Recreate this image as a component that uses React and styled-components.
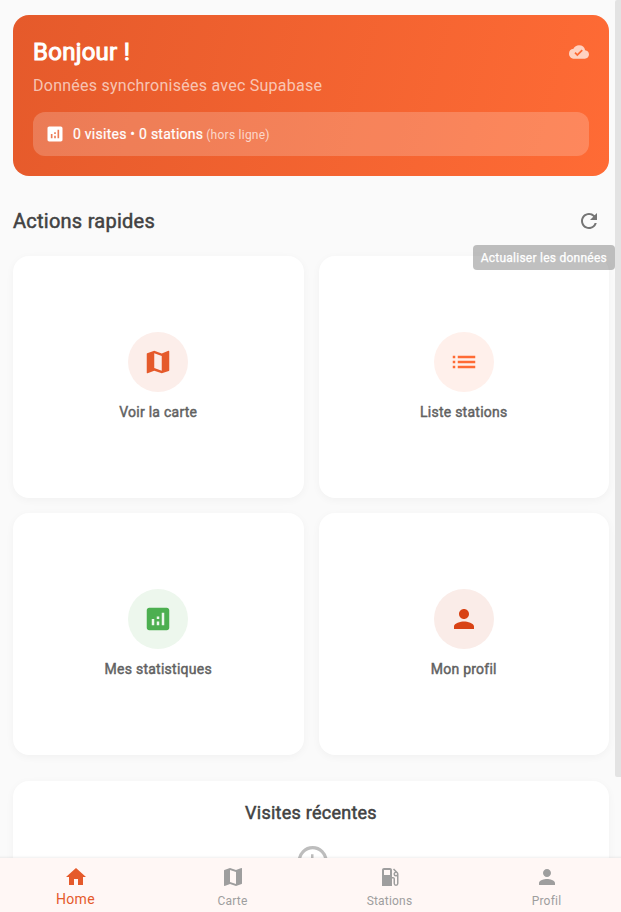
import React from "react";
import styled, { createGlobalStyle, css } from "styled-components";
import {
  MdAnalytics,
  MdCloudDone,
  MdHistory,
  MdHome,
  MdList,
  MdLocalGasStation,
  MdMap,
  MdPerson,
  MdRefresh,
} from "react-icons/md";

const GlobalStyle = createGlobalStyle`
  *, *::before, *::after { box-sizing: border-box; }
  html, body { margin: 0; padding: 0; }
  body { font-family: Roboto, "Liberation Sans", sans-serif; overflow: hidden; }
  h1, h2, h3, p { margin: 0; }
  svg { display: block; flex: none; }
`;

const emboldened = (width) => css`
  font-weight: 400;
  -webkit-text-stroke: ${width}px currentColor;
`;

const Screen = styled.div`
  position: relative;
  display: flex;
  flex-direction: column;
  height: 912px;
  overflow: hidden;
  background: #fafafa;
`;

const Content = styled.main`
  flex: 1;
  min-height: 0;
  overflow: hidden;
  padding: 15px 12px 0 13px;
`;

const Hero = styled.section`
  height: 161px;
  padding: 20px;
  border-radius: 16px;
  color: #fff;
  background: linear-gradient(105deg, #e55a2b 0%, #ff6b35 100%);
`;

const HeroTop = styled.div`
  display: flex;
  align-items: center;
  justify-content: space-between;
  height: 34px;
  color: rgba(255, 255, 255, 0.7);
`;

const Greeting = styled.h1`
  color: #fff;
  font-size: 24px;
  line-height: 32px;
  letter-spacing: 0.25px;
  ${emboldened(1)}
`;

const Subtitle = styled.p`
  margin-top: 5px;
  font-size: 16px;
  line-height: 24px;
  letter-spacing: 0.25px;
  color: rgba(255, 255, 255, 0.65);
`;

const Summary = styled.div`
  display: flex;
  align-items: center;
  gap: 8px;
  height: 44px;
  margin-top: 14px;
  padding: 0 12px;
  border-radius: 12px;
  background: rgba(255, 255, 255, 0.2);
`;

const SummaryText = styled.span`
  font-size: 14px;
  letter-spacing: 0.25px;
  ${emboldened(0.2)}
`;

const Offline = styled.span`
  margin-left: -5px;
  font-size: 12px;
  line-height: 16px;
  padding-top: 1px;
  letter-spacing: 0.25px;
  color: rgba(255, 255, 255, 0.7);
`;

const SectionHeader = styled.div`
  display: flex;
  align-items: center;
  justify-content: space-between;
  height: 40px;
  margin-top: 25px;
  padding-right: 8px;
  color: #757575;
`;

const SectionTitle = styled.h2`
  font-size: 20px;
  letter-spacing: 0.25px;
  color: #424242;
  ${emboldened(0.5)}
`;

const RefreshButton = styled.button`
  position: relative;
  display: flex;
  padding: 0;
  border: 0;
  background: none;
  color: inherit;
`;

const Tooltip = styled.span`
  position: absolute;
  top: 36px;
  right: -14px;
  z-index: 2;
  height: 25px;
  padding: 0 8px;
  border-radius: 4px;
  font: 400 12px/26px Roboto, sans-serif;
  letter-spacing: 0.25px;
  white-space: nowrap;
  color: #fff;
  background: rgba(97, 97, 97, 0.4);
  ${emboldened(0.25)}
`;

const Grid = styled.div`
  display: grid;
  grid-template-columns: 1fr 1fr;
  grid-auto-rows: 242px;
  gap: 15px;
  margin-top: 15px;
`;

const Card = styled.div`
  border-radius: 16px;
  background: #fff;
  box-shadow: 0 2px 8px rgba(0, 0, 0, 0.04);
`;

const ActionCard = styled(Card)`
  display: flex;
  flex-direction: column;
  align-items: center;
  padding-top: 76px;
`;

const IconCircle = styled.div`
  display: flex;
  align-items: center;
  justify-content: center;
  width: 60px;
  height: 60px;
  border-radius: 50%;
  color: ${(p) => p.$color};
  background: ${(p) => p.$tint};
`;

const ActionLabel = styled.span`
  margin-top: 10px;
  font-size: 14px;
  line-height: 20px;
  letter-spacing: 0.25px;
  color: #616161;
  ${emboldened(0.45)}
`;

const Recent = styled(Card)`
  display: flex;
  flex-direction: column;
  align-items: center;
  height: 200px;
  margin-top: 26px;
  padding-top: 20px;
  color: #bdbdbd;
`;

const RecentTitle = styled.h3`
  margin-bottom: 16px;
  font-size: 18px;
  line-height: 24px;
  letter-spacing: 0.25px;
  color: #424242;
  ${emboldened(0.5)}
`;

const NavBar = styled.nav`
  position: relative;
  display: grid;
  grid-template-columns: repeat(4, 1fr);
  height: 54px;
  margin: 0 -4px 0 -3px;
  background: #fff7f5;
  box-shadow: 0 0 3px rgba(0, 0, 0, 0.12);
`;

const NavItem = styled.div`
  display: flex;
  flex-direction: column;
  align-items: center;
  padding-top: 7px;
  color: ${(p) => (p.$active ? "#e55a2b" : "#9e9e9e")};
`;

const NavLabel = styled.span`
  margin-top: ${(p) => (p.$active ? 0 : 4)}px;
  font-size: ${(p) => (p.$active ? 14 : 12)}px;
  line-height: ${(p) => (p.$active ? 20 : 16)}px;
  letter-spacing: ${(p) => (p.$active ? 0.35 : 0.2)}px;
`;

const ScrollThumb = styled.div`
  position: absolute;
  top: 0;
  right: 0;
  width: 6px;
  height: 777px;
  border-radius: 2px 0 0 2px;
  background: #e3e3e3;
`;

const actions = [
  { label: "Voir la carte", icon: MdMap, color: "#e55a2b", tint: "#fceeea" },
  { label: "Liste stations", icon: MdList, color: "#ff6b35", tint: "#fff0eb" },
  { label: "Mes statistiques", icon: MdAnalytics, color: "#4caf50", tint: "#edf7ed" },
  { label: "Mon profil", icon: MdPerson, color: "#d84315", tint: "#faece8" },
];

const tabs = [
  { label: "Home", icon: MdHome, active: true },
  { label: "Carte", icon: MdMap },
  { label: "Stations", icon: MdLocalGasStation },
  { label: "Profil", icon: MdPerson },
];

export default function App() {
  return (
    <Screen>
      <GlobalStyle />
      <Content>
        <Hero>
          <HeroTop>
            <Greeting>Bonjour !</Greeting>
            <MdCloudDone size={20} />
          </HeroTop>
          <Subtitle>Données synchronisées avec Supabase</Subtitle>
          <Summary>
            <MdAnalytics size={20} color="#fff" />
            <SummaryText>0 visites • 0 stations</SummaryText>
            <Offline>(hors ligne)</Offline>
          </Summary>
        </Hero>
        <SectionHeader>
          <SectionTitle>Actions rapides</SectionTitle>
          <RefreshButton aria-label="Actualiser">
            <MdRefresh size={24} />
            <Tooltip>Actualiser les données</Tooltip>
          </RefreshButton>
        </SectionHeader>
        <Grid>
          {actions.map(({ label, icon: Icon, color, tint }) => (
            <ActionCard key={label}>
              <IconCircle $color={color} $tint={tint}>
                <Icon size={30} />
              </IconCircle>
              <ActionLabel>{label}</ActionLabel>
            </ActionCard>
          ))}
        </Grid>
        <Recent>
          <RecentTitle>Visites récentes</RecentTitle>
          <MdHistory size={40} />
        </Recent>
      </Content>
      <ScrollThumb />
      <NavBar>
        {tabs.map(({ label, icon: Icon, active }) => (
          <NavItem key={label} $active={active}>
            <Icon size={24} />
            <NavLabel $active={active}>{label}</NavLabel>
          </NavItem>
        ))}
      </NavBar>
    </Screen>
  );
}
